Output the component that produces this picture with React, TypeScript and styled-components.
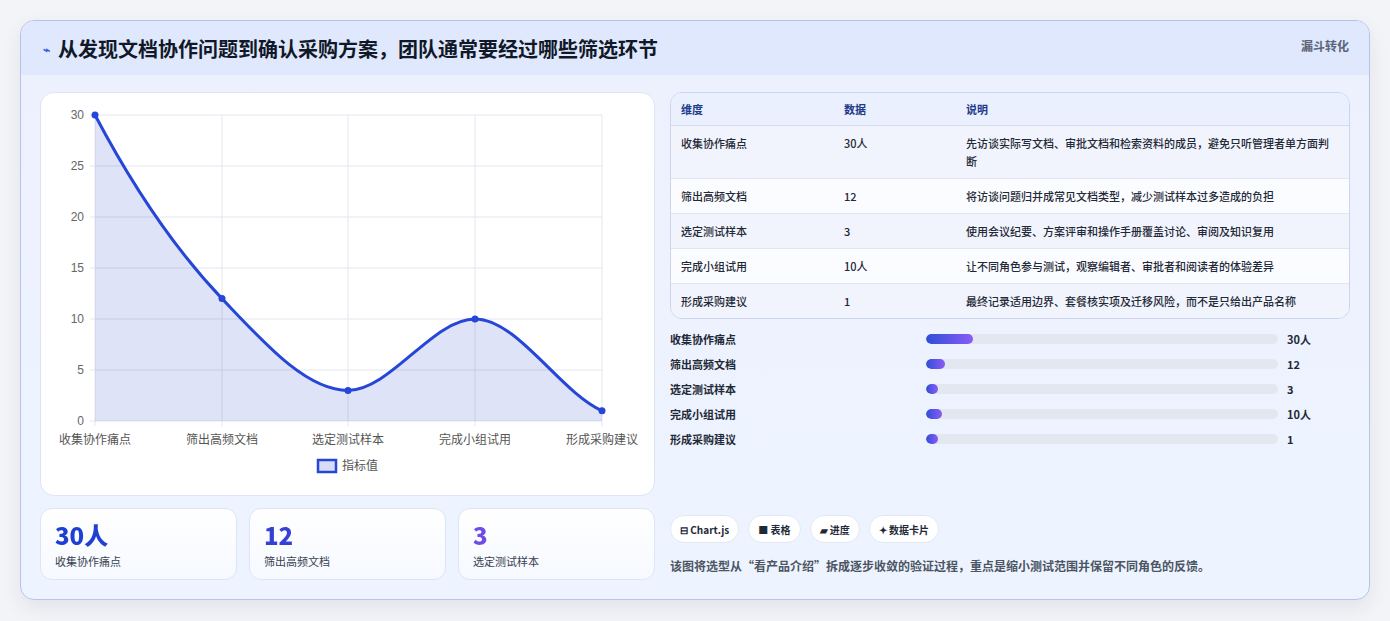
import React from "react";
import styled, { createGlobalStyle } from "styled-components";

const Global = createGlobalStyle`
  body { margin: 0; background: #f3f4f7; font-family: "Noto Sans CJK SC", "Noto Sans", sans-serif; }
`;
const Page = styled.div`padding: 20px 20px 21px 20px;`;
const Card = styled.div`
  border: 1px solid #b7c2ea; border-radius: 14px; overflow: hidden;
  background: linear-gradient(180deg, #ecf1fd 0%, #eef4ff 100%);
  box-shadow: 0 8px 20px rgba(30,40,90,0.08);
  height: 578px; display: flex; flex-direction: column;
`;
const Header = styled.div`
  height: 55px; background: #dfe8fd; display: flex; align-items: center;
  padding: 0 20px 0 22px; justify-content: space-between;
`;
const Title = styled.h1`
  margin: 0; font-size: 20px; font-weight: 700; color: #111827; display: flex; align-items: center; gap: 8px;
`;
const Badge = styled.span`font-size: 12px; font-weight: 700; color: #5b6478; align-self: flex-start; margin-top: 16px;`;
const Body = styled.div`
  flex: 1; display: grid; grid-template-columns: 615px 680px; gap: 15px; padding: 17px 19px 19px 19px;
`;
const Left = styled.div`display: flex; flex-direction: column; gap: 12px;`;
const ChartCard = styled.div`
  background: #fff; border: 1px solid #dde4f3; border-radius: 14px; height: 402px;
`;
const Stats = styled.div`display: grid; grid-template-columns: repeat(3, 1fr); gap: 12px;`;
const Stat = styled.div`
  background: linear-gradient(180deg,#fff,#f6f9ff); border: 1px solid #dde4f3; border-radius: 12px;
  height: 72px; padding: 12px 14px; box-sizing: border-box;
`;
const StatNum = styled.div<{ $c: string }>`
  font-size: 24px; font-weight: 900; line-height: 28px; font-family: "Noto Sans CJK SC", sans-serif;
  background: ${p => p.$c}; -webkit-background-clip: text; color: transparent;
`;
const StatLabel = styled.div`font-size: 11px; color: #374151; margin-top: 4px;`;
const Right = styled.div`display: flex; flex-direction: column;`;
const Table = styled.table`
  width: 100%; border-collapse: separate; border-spacing: 0; border: 1px solid #ccd5ee; border-radius: 12px; overflow: hidden;
  font-size: 11px; color: #1f2937; background: #f7f9fd; table-layout: fixed;
  th { background: #eaf0fd; color: #1e3a8a; text-align: left; font-weight: 700; height: 32px; padding: 0 10px; border-bottom: 1px solid #d5dcef; }
  td { padding: 8px 10px; line-height: 18px; font-weight: 500; border-bottom: 1px solid #e1e6f2; vertical-align: top; }
  tr:nth-child(even) td { background: #fbfcff; }
  tr:nth-child(odd) td { background: #f1f4fc; }
  tr:last-child td { border-bottom: none; }
`;
const Bars = styled.div`display: flex; flex-direction: column; gap: 7px; margin-top: 11px;`;
const BarRow = styled.div`display: grid; grid-template-columns: 256px 352px 1fr; align-items: center; height: 18px; font-size: 11px; font-weight: 600; color: #1f2937;`;
const Track = styled.div`height: 10px; border-radius: 5px; background: #e3e7f0; overflow: hidden;`;
const Fill = styled.div`height: 100%; border-radius: 5px; background: linear-gradient(90deg,#2f4fd8,#8b5cf6);`;
const BarVal = styled.div`padding-left: 9px; font-weight: 700;`;
const Tags = styled.div`display: flex; gap: 9px; margin-top: auto;`;
const Tag = styled.span`
  background: #fff; border: 1px solid #e2e8f3; border-radius: 14px; height: 26px; padding: 0 9px;
  display: flex; align-items: center; font-size: 10px; font-weight: 700; color: #1f2937;
`;
const Note = styled.p`margin: 14px 0 6px; font-size: 12px; font-weight: 600; color: #4b5563;`;

const rows = [
  ["收集协作痛点", "30人", "先访谈实际写文档、审批文档和检索资料的成员，避免只听管理者单方面判断", 13.4],
  ["筛出高频文档", "12", "将访谈问题归并成常见文档类型，减少测试样本过多造成的负担", 5.4],
  ["选定测试样本", "3", "使用会议纪要、方案评审和操作手册覆盖讨论、审阅及知识复用", 3.4],
  ["完成小组试用", "10人", "让不同角色参与测试，观察编辑者、审批者和阅读者的体验差异", 4.5],
  ["形成采购建议", "1", "最终记录适用边界、套餐核实项及迁移风险，而不是只给出产品名称", 3.4],
] as const;

function Chart() {
  const xs = [94, 221, 347, 474, 601];
  const vals = [30, 12, 3, 10, 1];
  const y = (v: number) => 421 - (v / 30) * 306;
  const ys = vals.map(y);
  const t = [1.9, 1.05, 0, 0, 0.45];
  let d = `M${xs[0]},${ys[0]}`;
  for (let i = 0; i < 4; i++) {
    const dx = (xs[i + 1] - xs[i]) / 3;
    d += ` C${xs[i] + dx},${ys[i] + t[i] * dx} ${xs[i + 1] - dx},${ys[i + 1] - t[i + 1] * dx} ${xs[i + 1]},${ys[i + 1]}`;
  }
  const labels = ["收集协作痛点", "筛出高频文档", "选定测试样本", "完成小组试用", "形成采购建议"];
  return (
    <svg width="615" height="402" viewBox="40 93 615 402">
      {[0, 5, 10, 15, 20, 25, 30].map(v => (
        <g key={v}>
          <line x1={89} x2={601} y1={y(v)} y2={y(v)} stroke="#e3e6ee" />
          <text x={83} y={y(v) + 4} fontSize="12" fill="#666" textAnchor="end" fontFamily="Liberation Sans">{v}</text>
        </g>
      ))}
      {xs.map(x => <line key={x} x1={x} x2={x} y1={115} y2={426} stroke="#e3e6ee" />)}
      <path d={`${d} L601,421 L94,421 Z`} fill="rgba(37,64,210,0.15)" />
      <path d={d} fill="none" stroke="#2546d6" strokeWidth="3" />
      {xs.map((x, i) => <circle key={x} cx={x} cy={ys[i]} r="3.5" fill="#2546d6" />)}
      {labels.map((l, i) => (
        <text key={l} x={xs[i]} y={444} fontSize="12" fill="#555" textAnchor="middle" fontFamily="Noto Sans CJK SC">{l}</text>
      ))}
      <rect x={317} y={460} width={18} height={12} fill="rgba(37,64,210,0.18)" stroke="#2546d6" strokeWidth="2.5" />
      <text x={341} y={470} fontSize="12" fill="#555" fontFamily="Noto Sans CJK SC">指标值</text>
    </svg>
  );
}

export default function App() {
  return (
    <Page>
      <Global />
      <Card>
        <Header>
          <Title><span style={{ color: "#3b5bdb", fontSize: 12 }}>⌁</span>从发现文档协作问题到确认采购方案，团队通常要经过哪些筛选环节</Title>
          <Badge>漏斗转化</Badge>
        </Header>
        <Body>
          <Left>
            <ChartCard><Chart /></ChartCard>
            <Stats>
              <Stat><StatNum $c="linear-gradient(90deg,#1d3fd1,#2546d6)">30人</StatNum><StatLabel>收集协作痛点</StatLabel></Stat>
              <Stat><StatNum $c="linear-gradient(90deg,#3340d4,#4b3fd9)">12</StatNum><StatLabel>筛出高频文档</StatLabel></Stat>
              <Stat><StatNum $c="linear-gradient(90deg,#6d4be6,#8b5cf6)">3</StatNum><StatLabel>选定测试样本</StatLabel></Stat>
            </Stats>
          </Left>
          <Right>
            <Table>
              <thead><tr><th style={{ width: 143 }}>维度</th><th style={{ width: 102 }}>数据</th><th>说明</th></tr></thead>
              <tbody>
                {rows.map(r => (
                  <tr key={r[0]}><td>{r[0]}</td><td>{r[1]}</td><td>{r[2]}</td></tr>
                ))}
              </tbody>
            </Table>
            <Bars>
              {rows.map(r => (
                <BarRow key={r[0]}>
                  <span>{r[0]}</span>
                  <Track><Fill style={{ width: `${r[3]}%` }} /></Track>
                  <BarVal>{r[1]}</BarVal>
                </BarRow>
              ))}
            </Bars>
            <Tags>
              <Tag>⊟ Chart.js</Tag><Tag>■ 表格</Tag><Tag>▰ 进度</Tag><Tag>✦ 数据卡片</Tag>
            </Tags>
            <Note>该图将选型从“看产品介绍”拆成逐步收敛的验证过程，重点是缩小测试范围并保留不同角色的反馈。</Note>
          </Right>
        </Body>
      </Card>
    </Page>
  );
}
